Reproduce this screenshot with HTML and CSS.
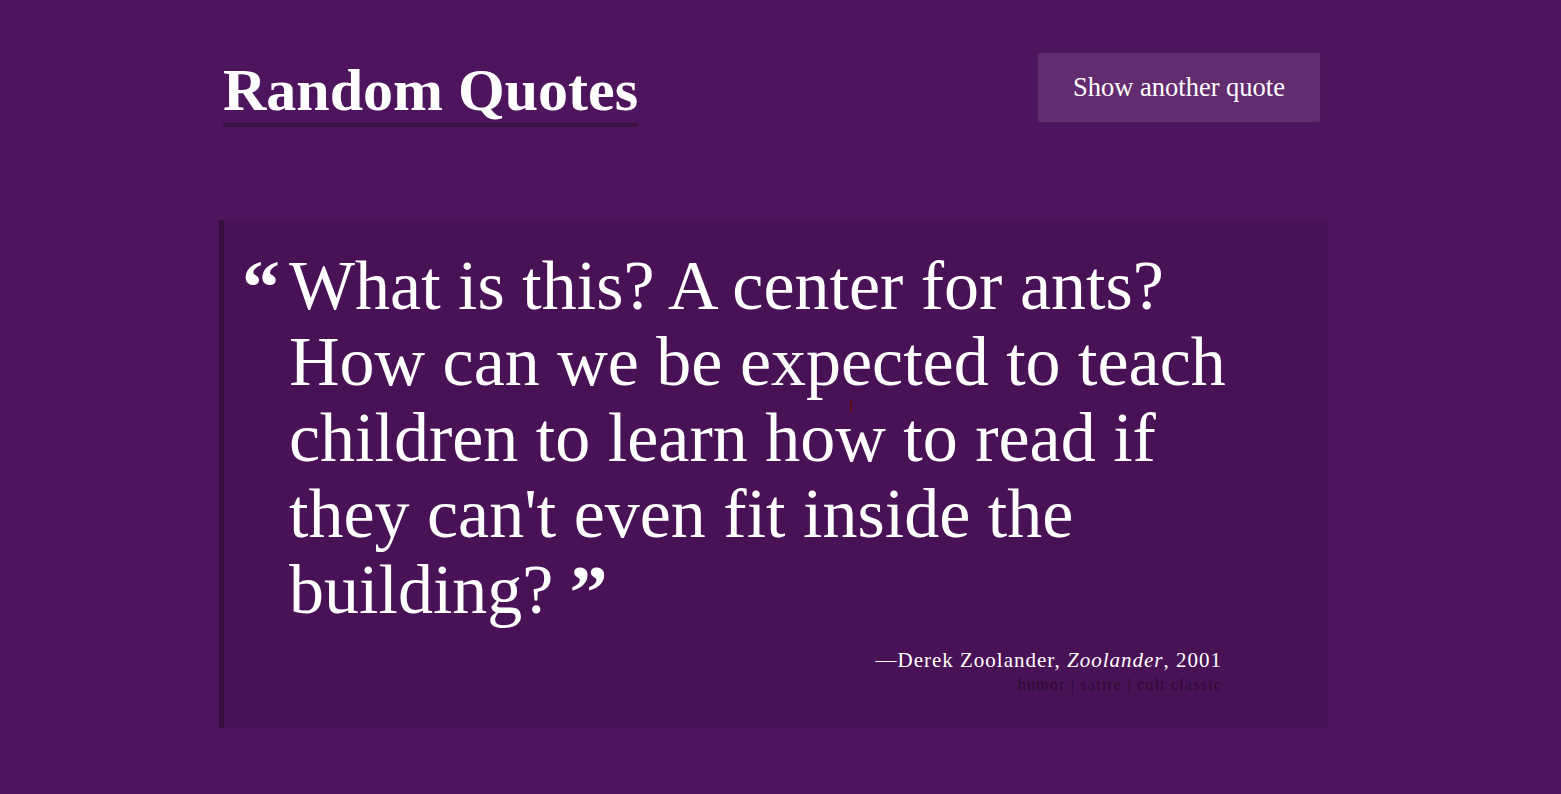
FILE: index.html
```html
<!DOCTYPE html>
<html lang="en">
<head>
<meta charset="utf-8">
<title>Random Quotes</title>
<link rel="stylesheet" href="styles.css">
</head>
<body>
<div class="page">
  <header class="header">
    <h1 class="title">Random Quotes</h1>
    <button class="btn" type="button">Show another quote</button>
  </header>
  <blockquote class="quote">
    <span class="caret"></span>
    <div class="quote-body">
      <span class="open-mark">“</span>
      <p class="quote-text">What is this? A center for ants? How can we be expected to teach children to learn how to read if they can't even fit inside the building?</p>
    </div>
    <footer class="attribution">
      <div class="source">—Derek Zoolander, <cite>Zoolander</cite>, 2001</div>
      <div class="tags">humor | satire | cult classic</div>
    </footer>
  </blockquote>
</div>
</body>
</html>
```

FILE: styles.css
```css
html, body {
  margin: 0;
  padding: 0;
}
body {
  background: #4f145e;
  color: #ffffff;
  font-family: "Liberation Serif", "DejaVu Serif", serif;
  min-height: 794px;
}
.page {
  width: 1109px;
  margin-left: 219px;
}
.header {
  display: flex;
  justify-content: space-between;
  align-items: flex-start;
  padding: 52px 7px 0 4px;
}
.title {
  margin: 0;
  margin-top: 11px;
  font-size: 60px;
  font-weight: bold;
  line-height: 54px;
  padding-bottom: 6px;
  border-bottom: 4px solid #3a0f46;
}
.btn {
  width: 284px;
  height: 71px;
  background: #632c70;
  border: 1px solid #4a1a56;
  border-radius: 3px;
  color: #ffffff;
  font-family: "Liberation Serif", "DejaVu Serif", serif;
  font-size: 26.5px;
  padding: 0;
  cursor: pointer;
}
.quote {
  position: relative;
  margin: 93px 0 0 0;
  background: #4a1256;
  border-left: 5px solid #360e40;
  padding: 28px 37px 33px 21px;
}
.caret {
  position: absolute;
  left: 626px;
  top: 180px;
  width: 2px;
  height: 12px;
  background: #5c0c14;
}
.quote-body {
  display: flex;
  align-items: flex-start;
}
.open-mark {
  flex: 0 0 47px;
  font-size: 76px;
  font-weight: bold;
  line-height: 76px;
  margin-top: 1px;
  margin-left: -3px;
}
.quote-text {
  flex: 0 0 960px;
  margin: 0;
  font-size: 70px;
  line-height: 76px;
}
.quote-text::after {
  content: "\201D";
  display: inline-block;
  font-size: 76px;
  font-weight: bold;
  margin-left: 16px;
  vertical-align: top;
  line-height: 40px;
  height: 40px;
  position: relative;
  top: 20px;
}
.attribution {
  text-align: right;
  margin-top: 19px;
  margin-right: 69px;
}
.source {
  font-size: 21px;
  letter-spacing: 1px;
  line-height: 26px;
}
.source cite {
  font-style: italic;
}
.tags {
  margin-top: 2px;
  font-size: 16px;
  letter-spacing: 1.2px;
  line-height: 20px;
  color: #2b0a33;
}
```
